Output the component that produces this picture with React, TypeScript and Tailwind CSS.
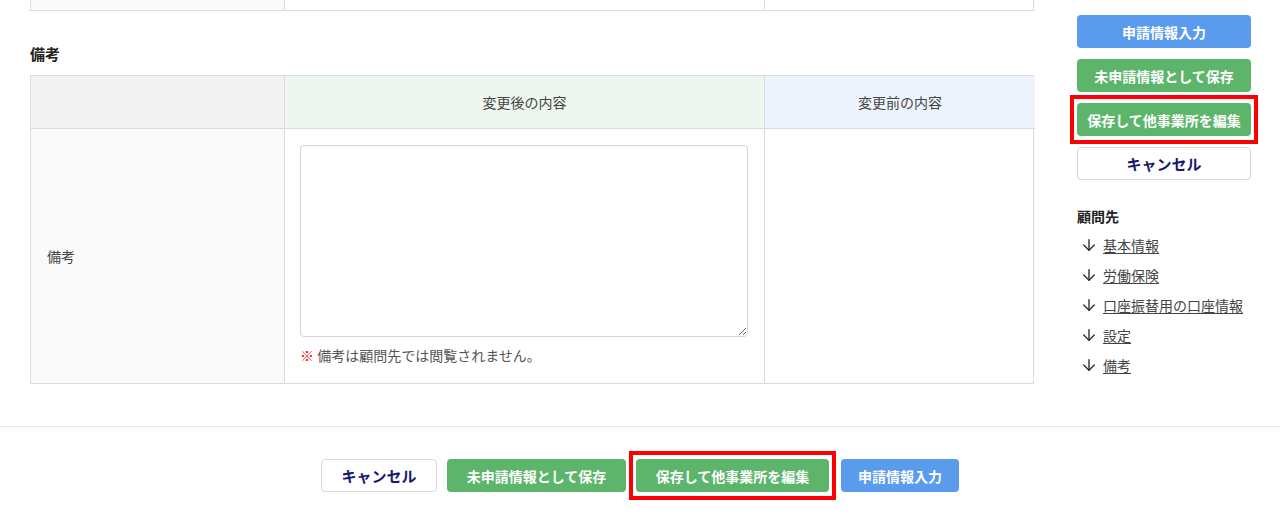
import { ArrowDown } from "lucide-react";

const jp = "font-['Noto_Sans_CJK_JP','Noto_Sans',sans-serif]";

const links = ["基本情報", "労働保険", "口座振替用の口座情報", "設定", "備考"];

function Highlight({ children, className = "" }: { children: React.ReactNode; className?: string }) {
  return (
    <div className={`relative ${className}`}>
      {children}
      <div className="pointer-events-none absolute -inset-x-[7px] -inset-y-[8px] border-4 border-[#ff0000]" />
    </div>
  );
}

export default function App() {
  const btn = "flex h-[33px] items-center justify-center rounded-[4px] text-[14px] font-bold leading-none";
  return (
    <div className={`h-[520px] w-[1280px] overflow-hidden bg-white text-[#333] ${jp}`}>
      <div className="flex">
        {/* main column */}
        <div className="w-[1034px] pl-[30px]">
          {/* tail of the previous table */}
          <div className="grid h-[11px] grid-cols-[253px_480px_271px] border-x border-b border-[#dcdcdc]">
            <div className="bg-[#fafafa]" />
            <div className="border-l border-[#dcdcdc]" />
            <div className="border-l border-[#dcdcdc]" />
          </div>

          <h2 className="mt-[32px] text-[15px] font-bold leading-[22px] text-[#222]">備考</h2>

          <div className="mt-[10px] grid grid-cols-[253px_480px_271px] border border-[#dcdcdc] text-[14px] text-[#444]">
            {/* header */}
            <div className="h-[52px] bg-[#f2f2f2]" />
            <div className="flex h-[52px] items-center justify-center border-l border-[#dcdcdc] bg-[#eef7ef]">変更後の内容</div>
            <div className="flex h-[52px] items-center justify-center border-l border-[#dcdcdc] bg-[#edf4fd]">変更前の内容</div>

            {/* body */}
            <div className="flex h-[255px] items-center border-t border-[#dcdcdc] bg-[#fafafa] pl-[16px] text-[14px]">備考</div>
            <div className="border-l border-t border-[#dcdcdc] px-[15px] pt-[16px]">
              <textarea className="block h-[192px] w-[448px] resize-y rounded-[4px] border border-[#d4d4d4] outline-none" />
              <p className="mt-[8px] text-[14px] text-[#555]">
                <span className="text-[#ff0000]">※</span> 備考は顧問先では閲覧されません。
              </p>
            </div>
            <div className="border-l border-t border-[#dcdcdc]" />
          </div>
        </div>

        {/* sidebar */}
        <div className="ml-[43px] w-[174px] pt-[15px]">
          <div className="flex flex-col gap-[11px]">
            <button className={`${btn} bg-[#5b9bee] text-white`}>申請情報入力</button>
            <button className={`${btn} bg-[#5db56b] text-white`}>未申請情報として保存</button>
            <Highlight>
              <button className={`${btn} w-full bg-[#5db56b] text-white`}>保存して他事業所を編集</button>
            </Highlight>
            <button className={`${btn} border border-[#d9d9d9] bg-white text-[15px] text-[#17186b]`}>キャンセル</button>
          </div>

          <div className="mt-[26px] text-[14px] font-bold leading-[20px] text-[#222]">顧問先</div>
          <ul className="mt-[9px] flex flex-col gap-[10px] pl-[3px]">
            {links.map((l) => (
              <li key={l} className="flex h-[20px] items-center gap-[5px] text-[14px] text-[#444]">
                <ArrowDown size={18} strokeWidth={1.9} className="text-[#333]" />
                <a className="underline underline-offset-2">{l}</a>
              </li>
            ))}
          </ul>
        </div>
      </div>

      {/* footer actions */}
      <div className="mt-[42px] flex justify-center gap-[10px] border-t border-[#e6e6e6] pt-[32px]">
        <button className={`${btn} w-[116px] border border-[#d9d9d9] bg-white text-[15px] text-[#17186b]`}>キャンセル</button>
        <button className={`${btn} w-[179px] bg-[#5db56b] text-white`}>未申請情報として保存</button>
        <Highlight>
          <button className={`${btn} w-[193px] bg-[#5db56b] text-white`}>保存して他事業所を編集</button>
        </Highlight>
        <button className={`${btn} ml-[2px] w-[118px] bg-[#5b9bee] text-white`}>申請情報入力</button>
      </div>
    </div>
  );
}
